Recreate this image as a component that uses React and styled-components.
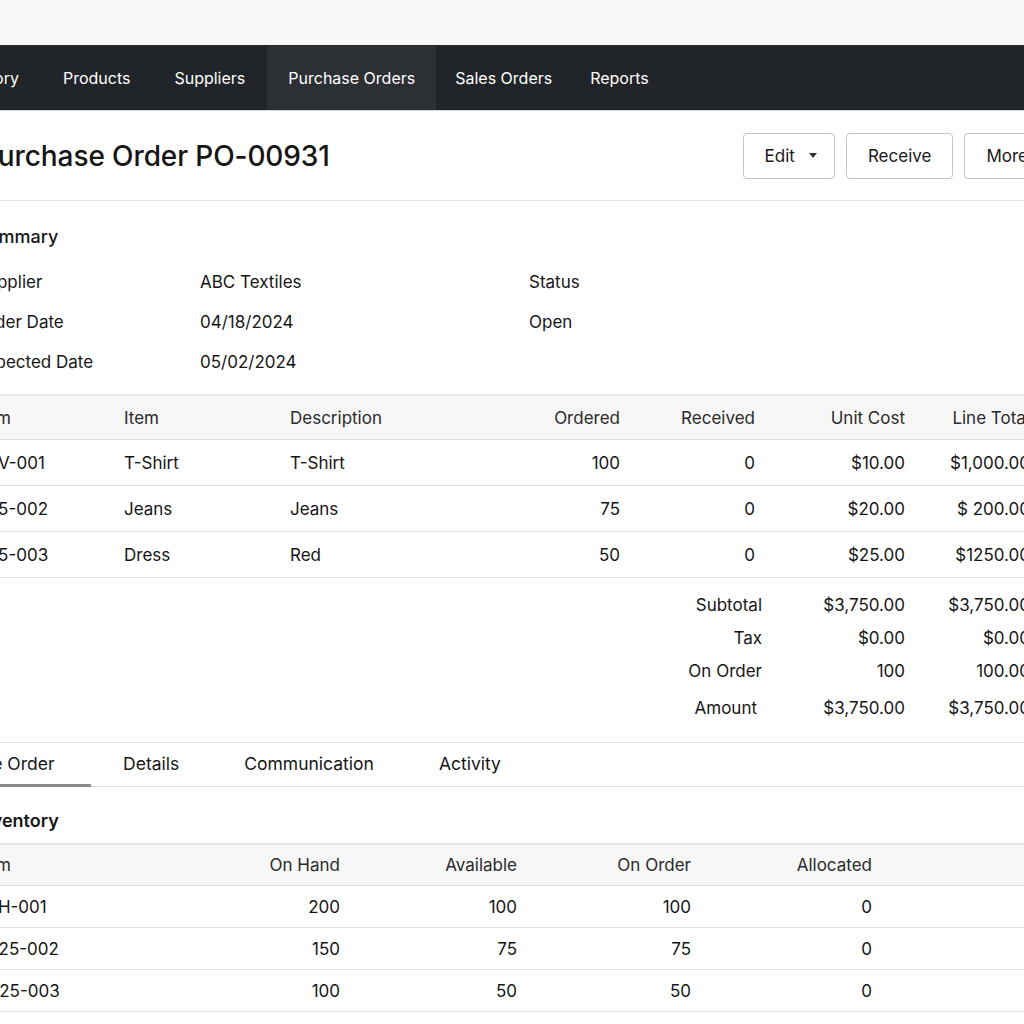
import React from "react";
import styled, { createGlobalStyle } from "styled-components";

const GlobalStyle = createGlobalStyle`
  html, body {
    margin: 0;
    padding: 0;
    background: #ffffff;
    overflow: hidden;
  }
  body {
    font-family: Inter, "Noto Sans", "Liberation Sans", sans-serif;
    color: #161616;
    -webkit-font-smoothing: antialiased;
  }
`;

// page is wider than the window and starts left of it, like the screenshot
const Page = styled.div`
  width: 1144px;
  margin-left: -74px;
`;

const TopBar = styled.div`
  height: 45px;
  background: #f8f8f8;
  border-bottom: 1px solid #2a2a2a;
`;

const NavBar = styled.nav`
  height: 64px;
  background: #212428;
  display: flex;
  align-items: stretch;
  border-bottom: 1px solid #d8d8d8;
`;

const NavItem = styled.a`
  display: flex;
  align-items: center;
  padding: 0 ${(p) => p.$pad || 21}px;
  color: #ffffff;
  font-size: 16px;
  text-decoration: none;
  background: ${(p) => (p.$active ? "#2c2f33" : "transparent")};
`;

const Main = styled.main`
  padding: 0 20px 0 50px;
`;

const Header = styled.header`
  height: 89px;
  display: flex;
  align-items: center;
  justify-content: space-between;
  border-bottom: 1px solid #e3e3e3;
  margin-left: -50px;
  padding-left: 54px;
`;

const Title = styled.h1`
  margin: 0;
  font-size: 28px;
  font-weight: 500;
  letter-spacing: -0.1px;
  color: #151515;
`;

const Actions = styled.div`
  display: flex;
  gap: 11px;
`;

const Button = styled.button`
  height: 46px;
  padding: 0 21px;
  display: flex;
  align-items: center;
  gap: 14px;
  background: #ffffff;
  border: 1px solid #c3c3c3;
  border-radius: 4px;
  font-family: inherit;
  font-size: 17px;
  color: #1a1a1a;
`;

const Caret = styled.span`
  width: 0;
  height: 0;
  border-left: 4px solid transparent;
  border-right: 4px solid transparent;
  border-top: 5px solid #333;
  margin-right: -4px;
`;

const Section = styled.section`
  padding: 22px 0 12px;
`;

const SectionTitle = styled.h2`
  margin: 0 0 ${(p) => p.$gap || 11}px;
  font-size: 18px;
  line-height: 28px;
  font-weight: ${(p) => p.$weight || 500};
  color: #151515;
`;

const SummaryGrid = styled.div`
  display: grid;
  grid-template-columns: 224px 329px 1fr;
  grid-auto-rows: 40px;
  align-items: center;
  font-size: 17px;
`;

const Table = styled.div`
  border-top: 2px solid #e9e9e9;
`;

const Row = styled.div`
  display: grid;
  grid-template-columns: ${(p) => p.$cols};
  height: ${(p) => p.$h}px;
  align-items: center;
  border-bottom: 1px solid #dedede;
  background: ${(p) => (p.$head ? "#f7f7f7" : "#ffffff")};
  color: ${(p) => (p.$head ? "#2a2a2a" : "#151515")};
  font-size: 17px;
  white-space: nowrap;
`;

const Cell = styled.div`
  text-align: ${(p) => (p.$right ? "right" : "left")};
`;

const Totals = styled.div`
  padding: 10px 0 14px;
`;

const TotalRow = styled.div`
  display: grid;
  grid-template-columns: 786px 143px 125px;
  height: ${(p) => p.$h || 33}px;
  align-items: center;
  font-size: 17px;
  white-space: nowrap;
  text-align: right;
`;

const TotalLabel = styled.div`
  padding-right: ${(p) => p.$pr || 0}px;
`;

const TabBar = styled.div`
  display: flex;
  height: 43px;
  border-top: 1px solid #e3e3e3;
  border-bottom: 1px solid #e3e3e3;
  margin-left: -50px;
`;

const TabList = styled.div`
  display: flex;
  margin-left: -36px;
`;

const Tab = styled.div`
  display: flex;
  align-items: center;
  padding: 0 ${(p) => (p.$active ? 36 : 32.5)}px 0 ${(p) => (p.$active ? 35 : 32.5)}px;
  font-size: 17.5px;
  color: #151515;
  box-sizing: border-box;
  border-bottom: 3px solid ${(p) => (p.$active ? "#8a8a8a" : "transparent")};
  margin-bottom: -1px;
  white-space: nowrap;
`;

const InvSection = styled.section`
  padding-top: 20px;
`;

const poCols = "148px 166px 210px 120px 135px 150px 125px";
const invCols = "204px 160px 177px 174px 181px 1fr";

const lines = [
  ["TSV-001", "T-Shirt", "T-Shirt", "100", "0", "$10.00", "$1,000.00"],
  ["A25-002", "Jeans", "Jeans", "75", "0", "$20.00", "$ 200.00"],
  ["A25-003", "Dress", "Red", "50", "0", "$25.00", "$1250.00"],
];

const stock = [
  ["TSH-001", "200", "100", "100", "0"],
  ["JN25-002", "150", "75", "75", "0"],
  ["DR25-003", "100", "50", "50", "0"],
];

const navItems = [
  { label: "Inventory", pad: 22 },
  { label: "Products", pad: 22 },
  { label: "Suppliers", pad: 22 },
  { label: "Purchase Orders", pad: 21, active: true },
  { label: "Sales Orders", pad: 19 },
  { label: "Reports", pad: 19 },
];

export default function App() {
  return (
    <>
      <GlobalStyle />
      <Page>
        <TopBar />
        <NavBar>
          {navItems.map((n) => (
            <NavItem key={n.label} href="#" $pad={n.pad} $active={n.active}>
              {n.label}
            </NavItem>
          ))}
        </NavBar>
        <Main>
          <Header>
            <Title>Purchase Order PO-00931</Title>
            <Actions>
              <Button>
                Edit <Caret />
              </Button>
              <Button>Receive</Button>
              <Button>More</Button>
            </Actions>
          </Header>

          <Section>
            <SectionTitle>Summary</SectionTitle>
            <SummaryGrid>
              <div>Supplier</div>
              <div>ABC Textiles</div>
              <div>Status</div>
              <div>Order Date</div>
              <div>04/18/2024</div>
              <div>Open</div>
              <div>Expected Date</div>
              <div>05/02/2024</div>
              <div />
            </SummaryGrid>
          </Section>

          <Table>
            <Row $head $cols={poCols} $h={43}>
              <Cell>Item</Cell>
              <Cell>Item</Cell>
              <Cell>Description</Cell>
              <Cell $right>Ordered</Cell>
              <Cell $right>Received</Cell>
              <Cell $right>Unit Cost</Cell>
              <Cell $right>Line Total</Cell>
            </Row>
            {lines.map((r) => (
              <Row key={r[0]} $cols={poCols} $h={45}>
                {r.map((c, i) => (
                  <Cell key={i} $right={i > 2}>
                    {c}
                  </Cell>
                ))}
              </Row>
            ))}
          </Table>

          <Totals>
            <TotalRow>
              <TotalLabel>Subtotal</TotalLabel>
              <div>$3,750.00</div>
              <div>$3,750.00</div>
            </TotalRow>
            <TotalRow>
              <TotalLabel>Tax</TotalLabel>
              <div>$0.00</div>
              <div>$0.00</div>
            </TotalRow>
            <TotalRow>
              <TotalLabel>On Order</TotalLabel>
              <div>100</div>
              <div>100.00</div>
            </TotalRow>
            <TotalRow $h={41}>
              <TotalLabel $pr={5}>Amount</TotalLabel>
              <div>$3,750.00</div>
              <div>$3,750.00</div>
            </TotalRow>
          </Totals>

          <TabBar>
            <TabList>
              <Tab $active>Purchase Order</Tab>
              <Tab>Details</Tab>
              <Tab>Communication</Tab>
              <Tab>Activity</Tab>
            </TabList>
          </TabBar>

          <InvSection>
            <SectionTitle $weight={600} $gap={8}>Inventory</SectionTitle>
            <Table>
              <Row $head $cols={invCols} $h={40}>
                <Cell>Item</Cell>
                <Cell $right>On Hand</Cell>
                <Cell $right>Available</Cell>
                <Cell $right>On Order</Cell>
                <Cell $right>Allocated</Cell>
                <Cell />
              </Row>
              {stock.map((r) => (
                <Row key={r[0]} $cols={invCols} $h={41}>
                  {r.map((c, i) => (
                    <Cell key={i} $right={i > 0}>
                      {c}
                    </Cell>
                  ))}
                  <Cell />
                </Row>
              ))}
            </Table>
          </InvSection>
        </Main>
      </Page>
    </>
  );
}
